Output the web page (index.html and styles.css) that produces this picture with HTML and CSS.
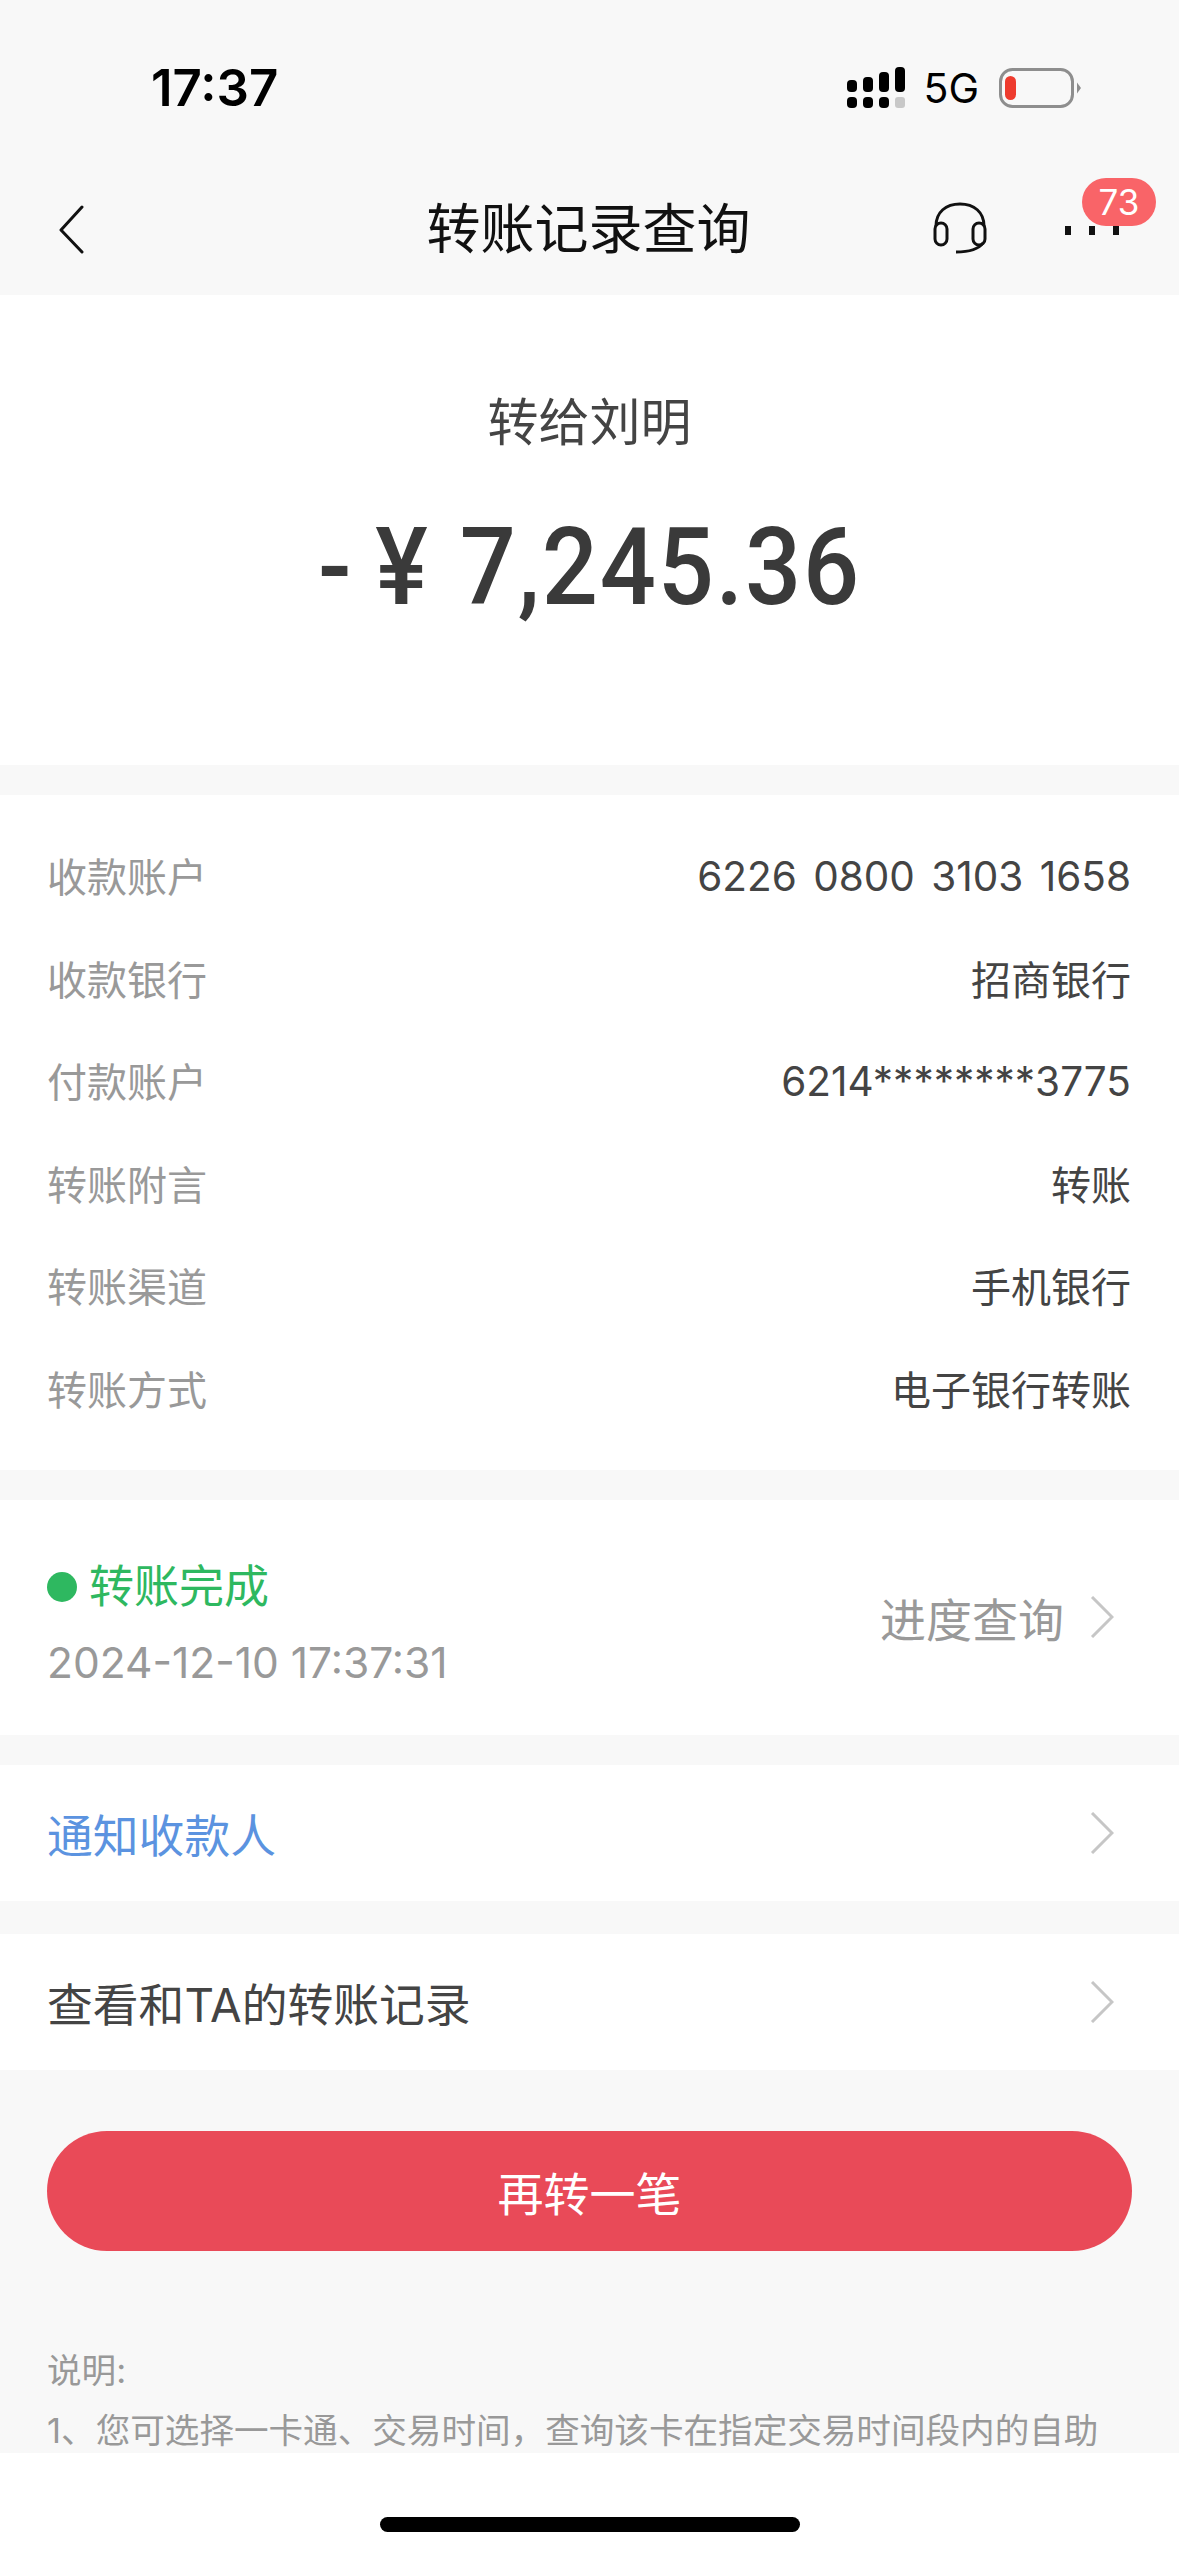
FILE: index.html
```html
<!DOCTYPE html>
<html lang="zh">
  <head>
    <meta charset="utf-8">
    <title>转账记录查询</title>
    <link rel="stylesheet" href="styles.css">
  </head>
  <body>
    <div class="top">
      <div class="status">
        <span class="time">17:37</span>
        <div class="status-right">
          <svg class="signal" width="58" height="41" viewBox="0 0 58 41">
            <rect x="0" y="13" width="10" height="12" rx="4"/>
            <rect x="16" y="10" width="10" height="15" rx="4"/>
            <rect x="32" y="5" width="10" height="20" rx="4"/>
            <rect x="48" y="0" width="10" height="25" rx="4"/>
            <rect x="0" y="30" width="10" height="11" rx="4"/>
            <rect x="16" y="30" width="10" height="11" rx="4"/>
            <rect x="32" y="30" width="10" height="11" rx="4"/>
            <rect x="48" y="30" width="10" height="11" rx="3" fill="#c8c8c8"/>
          </svg>
          <span class="net">5G</span>
          <svg class="battery" width="82" height="40" viewBox="0 0 82 40">
            <rect x="1.5" y="1.5" width="72" height="37" rx="12" fill="none" stroke="#8e8e8e" stroke-width="3"/>
            <rect x="6" y="8" width="11" height="24" rx="5.5" fill="#ee3b2e"/>
            <path d="M78 14.5l4 5.500-4 5.500z" fill="#8e8e8e"/>
          </svg>
        </div>
      </div>
      <div class="nav">
        <svg class="back" width="26" height="50" viewBox="0 0 26 50">
          <path d="M24 2L3 25l21 22" fill="none" stroke="#111" stroke-width="3" stroke-linecap="round" stroke-linejoin="round"/>
        </svg>
        <h1 class="title">转账记录查询</h1>
        <div class="nav-right">
          <svg class="headset" width="54" height="52" viewBox="0 0 54 52">
            <path d="M3 24C3 10 13 2 27 2s24 8 24 22" fill="none" stroke="#111" stroke-width="3"/>
            <rect x="2" y="21" width="12" height="22" rx="6" fill="none" stroke="#111" stroke-width="3"/>
            <rect x="40" y="21" width="12" height="22" rx="6" fill="none" stroke="#111" stroke-width="3"/>
            <path d="M23 50c12 0 22-2 27-9" fill="none" stroke="#111" stroke-width="3"/>
          </svg>
          <div class="more">
            <i></i><i></i><i></i>
            <span class="badge">73</span>
          </div>
        </div>
      </div>
    </div>

    <div class="section hero">
      <div class="payee">转给刘明</div>
      <div class="amount"><span class="sign">-</span><span class="yen">¥</span>7,245.36</div>
    </div>

    <div class="section details">
      <div class="row"><span class="label">收款账户</span><span class="value num">6226 0800 3103 1658</span></div>
      <div class="row"><span class="label">收款银行</span><span class="value">招商银行</span></div>
      <div class="row"><span class="label">付款账户</span><span class="value num">6214********3775</span></div>
      <div class="row"><span class="label">转账附言</span><span class="value">转账</span></div>
      <div class="row"><span class="label">转账渠道</span><span class="value">手机银行</span></div>
      <div class="row"><span class="label">转账方式</span><span class="value">电子银行转账</span></div>
    </div>

    <div class="section progress">
      <div>
        <div class="state"><span class="dot"></span>转账完成</div>
        <div class="date">2024-12-10 17:37:31</div>
      </div>
      <div class="link-right">
        <span>进度查询</span>
        <svg class="chev" width="24" height="42" viewBox="0 0 24 42"><path d="M2 1l20 20L2 41" fill="none" stroke="#c6c6c6" stroke-width="3"/></svg>
      </div>
    </div>

    <div class="section item notify">
      <span>通知收款人</span>
      <svg class="chev" width="24" height="42" viewBox="0 0 24 42"><path d="M2 1l20 20L2 41" fill="none" stroke="#c6c6c6" stroke-width="3"/></svg>
    </div>

    <div class="section item history">
      <span>查看和TA的转账记录</span>
      <svg class="chev" width="24" height="42" viewBox="0 0 24 42"><path d="M2 1l20 20L2 41" fill="none" stroke="#c6c6c6" stroke-width="3"/></svg>
    </div>

    <div class="action"><button class="again" type="button">再转一笔</button></div>

    <div class="note">
      <p>说明:</p>
      <p>1、您可选择一卡通、交易时间，查询该卡在指定交易时间段内的自助</p>
    </div>

    <div class="home"><span class="home-bar"></span></div>
  </body>
</html>
```

FILE: styles.css
```css
* {
  box-sizing: border-box;
}

html, body {
  margin: 0;
  padding: 0;
}

body {
  display: flex;
  flex-direction: column;
  width: 1179px;
  height: 2556px;
  overflow: hidden;
  background: #f8f8f8;
  font-family: Inter, "Noto Sans CJK SC", sans-serif;
  color: #333;
}

.top {
  height: 295px;
}

.status {
  display: flex;
  justify-content: space-between;
  align-items: center;
  height: 165px;
  padding: 10px 98px 0 151px;
}

.time {
  font-family: Inter, sans-serif;
  font-size: 51px;
  font-weight: 600;
  color: #000;
}

.status-right {
  display: flex;
  align-items: center;
}

.net {
  margin: 0 20px 0 18px;
  font-size: 41px;
  color: #000;
}

.nav {
  display: grid;
  grid-template-columns: 1fr auto 1fr;
  align-items: center;
  height: 130px;
  padding: 0 60px 0 58px;
}

.title {
  margin: 0;
  padding-bottom: 10px;
  font-size: 54px;
  font-weight: 400;
  color: #111;
}

.nav-right {
  display: flex;
  justify-content: flex-end;
  align-items: center;
}

.headset {
  margin: 0 78px 4px 0;
}

.more {
  position: relative;
  display: flex;
  gap: 18px;
}

.more i {
  display: block;
  width: 6px;
  height: 9px;
  background: #111;
}

.badge {
  position: absolute;
  left: 17px;
  top: -48px;
  width: 74px;
  height: 48px;
  border-radius: 24px;
  background: #f96468;
  color: white;
  font-size: 35px;
  line-height: 48px;
  text-align: center;
}

.section {
  background: white;
}

.hero {
  height: 470px;
  margin-bottom: 30px;
  padding-top: 93px;
  text-align: center;
}

.payee {
  font-size: 51px;
  line-height: 70px;
  color: #444;
}

.amount {
  margin-top: 46px;
  font-family: Roboto, sans-serif;
  font-size: 108px;
  font-weight: 500;
  line-height: 126px;
  letter-spacing: 2px;
  color: #3a3a3a;
  transform: scaleX(0.915);
}

.sign {
  margin-right: 24px;
}

.yen {
  margin-right: 33px;
}

.details {
  height: 675px;
  margin-bottom: 30px;
  padding-top: 29px;
}

.row {
  display: flex;
  justify-content: space-between;
  align-items: center;
  height: 102.500px;
  padding: 0 48px 0 47px;
  font-size: 40px;
}

.label {
  color: #999;
}

.value {
  color: #444;
}

.num {
  padding-top: 3px;
  font-size: 40.500px;
  word-spacing: 5px;
}

.progress {
  display: flex;
  justify-content: space-between;
  align-items: center;
  height: 235px;
  margin-bottom: 30px;
  padding: 10px 65px 0 47px;
}

.state {
  display: flex;
  align-items: center;
  font-size: 45px;
  line-height: 64px;
  color: #2eb860;
}

.dot {
  width: 30px;
  height: 30px;
  margin-right: 12px;
  border-radius: 50%;
  background: #2eb860;
}

.date {
  margin-top: 16px;
  font-size: 42.500px;
  line-height: 56px;
  color: #999;
}

.link-right {
  display: flex;
  align-items: center;
  gap: 26px;
  margin-top: -12px;
  font-size: 46px;
  color: #999;
}

.item {
  display: flex;
  justify-content: space-between;
  align-items: center;
  height: 136px;
  padding: 0 65px 0 47px;
  font-size: 45.800px;
}

.notify {
  margin-bottom: 33px;
  color: #5b93e0;
}

.history {
  color: #444;
}

.action {
  padding: 61px 47px 0 47px;
}

.again {
  display: block;
  width: 100%;
  height: 120px;
  padding: 0;
  border: none;
  border-radius: 60px;
  background: #e94a58;
  color: white;
  font-family: inherit;
  font-size: 46px;
}

.note {
  flex: 1;
  min-height: 0;
  overflow: hidden;
  padding: 89px 47px 0 47px;
  font-size: 34.600px;
  line-height: 60px;
  color: #999;
}

.note p {
  margin: 0;
  white-space: nowrap;
}

.home {
  display: flex;
  justify-content: center;
  height: 103px;
  padding-top: 64px;
  background: white;
}

.home-bar {
  width: 420px;
  height: 15px;
  border-radius: 8px;
  background: black;
}
```
